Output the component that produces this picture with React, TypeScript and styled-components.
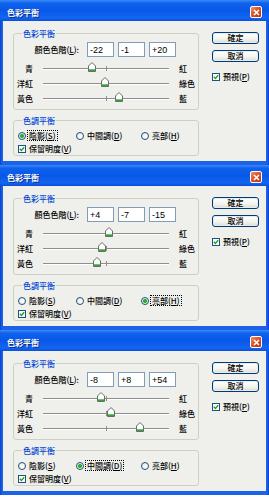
import React from "react";
import styled, { createGlobalStyle } from "styled-components";

const GlobalStyle = createGlobalStyle`
  html, body {
    margin: 0;
    padding: 0;
    background: #ffffff;
  }
  body {
    font-family: "Noto Sans CJK TC", "Noto Sans", sans-serif;
    font-size: 8px;
    font-weight: 500;
    color: #000;
  }
`;

type Tone = "shadow" | "mid" | "high";
type DialogData = { levels: number[]; tone: Tone };

const dialogs: DialogData[] = [
  { levels: [-22, -1, 20], tone: "shadow" },
  { levels: [4, -7, -15], tone: "high" },
  { levels: [-8, 8, 54], tone: "mid" },
];

const sliderLabels = [
  ["青", "紅"],
  ["洋紅", "綠色"],
  ["黃色", "藍"],
];

const tones: { key: Tone; text: string; hot: string }[] = [
  { key: "shadow", text: "陰影", hot: "S" },
  { key: "mid", text: "中間調", hot: "D" },
  { key: "high", text: "亮部", hot: "H" },
];

const fmt = (n: number) => (n > 0 ? `+${n}` : `${n}`);

function Dialog({ levels, tone }: DialogData) {
  return (
    <Window>
      <TitleBar>
        <Title>色彩平衡</Title>
        <CloseButton>
          <svg width="7" height="7" viewBox="0 0 7 7">
            <path d="M1 1 L6 6 M6 1 L1 6" stroke="#fff" strokeWidth="1.6" />
          </svg>
        </CloseButton>
      </TitleBar>
      <Body>
        <LeftColumn>
          <GroupBox $padTop={8} $padBottom={3}>
            <Legend>色彩平衡</Legend>
            <LevelsRow>
              <LevelsLabel>
                顏色色階(<u>L</u>):
              </LevelsLabel>
              {levels.map((v, i) => (
                <LevelInput key={i} readOnly value={fmt(v)} />
              ))}
            </LevelsRow>
            <Sliders>
              {sliderLabels.map(([left, right], i) => (
                <SliderRow key={i}>
                  <SideLabel $align="right">{left}</SideLabel>
                  <Track>
                    <Thumb style={{ left: `calc(50% + ${(levels[i] / 100) * 63}px - 4px)` }}>
                      <svg width="8" height="10" viewBox="0 0 8 10">
                        <path d="M0.5 4 L4 0.5 L7.5 4 V9.5 H0.5 Z" fill="#fff" stroke="#6b6b6b" />
                        <rect x="1" y="7.3" width="6" height="1.8" fill="#2fa82f" />
                      </svg>
                    </Thumb>
                  </Track>
                  <SideLabel $align="left">{right}</SideLabel>
                </SliderRow>
              ))}
            </Sliders>
          </GroupBox>
          <GroupBox $padTop={8} $padBottom={0}>
            <Legend>色調平衡</Legend>
            <ToneGrid>
              {tones.map((t) => (
                <Option key={t.key}>
                  <Radio $checked={t.key === tone} />
                  <OptionText $focused={t.key === tone}>
                    {t.text}(<u>{t.hot}</u>)
                  </OptionText>
                </Option>
              ))}
              <Option>
                <CheckBox>
                  <CheckMark />
                </CheckBox>
                <OptionText $focused={false}>
                  保留明度(<u>V</u>)
                </OptionText>
              </Option>
            </ToneGrid>
          </GroupBox>
        </LeftColumn>
        <RightColumn>
          <Button>確定</Button>
          <Button>取消</Button>
          <PreviewRow>
            <CheckBox>
              <CheckMark />
            </CheckBox>
            <OptionText $focused={false}>
              預視(<u>P</u>)
            </OptionText>
          </PreviewRow>
        </RightColumn>
      </Body>
    </Window>
  );
}

function CheckMark() {
  return (
    <svg width="6" height="6" viewBox="0 0 6 6">
      <path d="M0.8 2.8 L2.4 4.4 L5.2 1.2" fill="none" stroke="#21a121" strokeWidth="1.4" />
    </svg>
  );
}

export default function App() {
  return (
    <>
      <GlobalStyle />
      <Stack>
        {dialogs.map((d, i) => (
          <Dialog key={i} {...d} />
        ))}
      </Stack>
    </>
  );
}

const Stack = styled.main`
  width: 269px;
  display: flex;
  flex-direction: column;
`;

const Window = styled.section`
  width: 269px;
  height: 165px;
  box-sizing: border-box;
  display: flex;
  flex-direction: column;
  background: linear-gradient(to right, #0a3fc9 0, #1c62e8 2px, #1c62e8 calc(100% - 2px), #0a3fc9 100%);
`;

const TitleBar = styled.header`
  height: 21px;
  box-sizing: border-box;
  padding: 3px 7px 0 7px;
  display: flex;
  align-items: center;
  justify-content: space-between;
  background: linear-gradient(
    to bottom,
    #3a8cf8 0%,
    #0f62ec 15%,
    #0858e8 50%,
    #1366f0 85%,
    #0a4fdc 100%
  );
`;

const Title = styled.span`
  color: #ffffff;
  font-weight: bold;
  font-size: 8px;
  text-shadow: 1px 1px 0 #0a2a8a;
`;

const CloseButton = styled.span`
  width: 12px;
  height: 12px;
  box-sizing: border-box;
  border: 1px solid #ffffff;
  border-radius: 2px;
  background: linear-gradient(to bottom right, #f09070, #d8481f 55%, #b8320e);
  display: flex;
  align-items: center;
  justify-content: center;
`;

const Body = styled.div`
  flex: 1;
  margin: 0 3px 4px;
  background: #efefec;
  display: flex;
  box-sizing: border-box;
  padding: 11px 0 0 10px;
`;

const LeftColumn = styled.div`
  width: 186px;
  padding-top: 1px;
  display: flex;
  flex-direction: column;
  gap: 10px;
`;

const GroupBox = styled.div<{ $padTop: number; $padBottom: number }>`
  position: relative;
  border: 1px solid #cfcfc4;
  border-radius: 3px;
  padding: ${(p) => p.$padTop}px 0 ${(p) => p.$padBottom}px 0;
`;

const Legend = styled.span`
  position: absolute;
  top: -6px;
  left: 8px;
  padding: 0 1px;
  line-height: 11px;
  background: #efefec;
  color: #0046d5;
`;

const LevelsRow = styled.div`
  display: flex;
  align-items: center;
  gap: 4px;
  height: 15px;
`;

const LevelsLabel = styled.span`
  width: 65px;
  margin-right: 4px;
  text-align: right;
  white-space: nowrap;
`;

const LevelInput = styled.input`
  width: 27px;
  height: 15px;
  box-sizing: border-box;
  margin: 0;
  padding: 0 2px;
  border: 1px solid #7f9db9;
  background: #ffffff;
  font-family: "Liberation Sans", Arial, sans-serif;
  font-size: 9px;
  color: #000;
  outline: none;
`;

const Sliders = styled.div`
  margin-top: 4px;
  display: flex;
  flex-direction: column;
`;

const SliderRow = styled.div`
  height: 15px;
  display: grid;
  grid-template-columns: 19px 126px auto;
  column-gap: 10px;
  align-items: center;
`;

const SideLabel = styled.span<{ $align: "left" | "right" }>`
  text-align: ${(p) => p.$align};
  white-space: nowrap;
  line-height: 15px;
`;

const Track = styled.div`
  position: relative;
  height: 15px;

  &::before {
    content: "";
    position: absolute;
    left: 0;
    right: 0;
    top: 7px;
    height: 1px;
    background: #8e8e8e;
    box-shadow: 0 1px 0 #ffffff;
  }

  &::after {
    content: "";
    position: absolute;
    left: 50%;
    top: 5px;
    width: 1px;
    height: 5px;
    background: #8e8e8e;
  }
`;

const Thumb = styled.span`
  position: absolute;
  top: 1px;
  width: 8px;
  height: 10px;
  z-index: 1;
  display: block;
  line-height: 0;
`;

const ToneGrid = styled.div`
  display: grid;
  grid-template-columns: 58px 65px auto;
  grid-auto-rows: 13px;
  padding-left: 4px;
`;

const Option = styled.label`
  display: flex;
  align-items: center;
  gap: 1px;
  white-space: nowrap;
`;

const Radio = styled.span<{ $checked: boolean }>`
  width: 8px;
  height: 8px;
  box-sizing: border-box;
  border: 1px solid #1c5180;
  border-radius: 50%;
  flex: none;
  background: ${(p) =>
    p.$checked
      ? "radial-gradient(circle, #2bb02b 0 1.6px, #9ddc9d 2.1px, #f4f4f0 2.6px, #dcdcd4 100%)"
      : "radial-gradient(circle at 70% 70%, #ffffff 0, #f4f4f0 50%, #dcdcd4 100%)"};
`;

const CheckBox = styled.span`
  width: 8px;
  height: 8px;
  box-sizing: border-box;
  border: 1px solid #1c5180;
  background: #ffffff;
  flex: none;
  display: flex;
  align-items: center;
  justify-content: center;
`;

const OptionText = styled.span<{ $focused: boolean }>`
  border: 1px ${(p) => (p.$focused ? "dotted #000" : "solid transparent")};
  padding: 0 1px;
  line-height: 9px;
`;

const RightColumn = styled.div`
  margin-left: 13px;
  width: 47px;
  display: flex;
  flex-direction: column;
  gap: 6px;
`;

const Button = styled.div`
  width: 47px;
  height: 12px;
  box-sizing: border-box;
  border: 1px solid #003c74;
  border-radius: 3px;
  background: linear-gradient(to bottom, #ffffff 0%, #f3f3ef 60%, #dcd8cc 100%);
  box-shadow: inset 0 0 0 1px #e4ecf8;
  display: flex;
  align-items: center;
  justify-content: center;
  line-height: 10px;
`;

const PreviewRow = styled.label`
  margin-top: 4px;
  height: 9px;
  display: flex;
  align-items: center;
  gap: 1px;
  white-space: nowrap;
`;
